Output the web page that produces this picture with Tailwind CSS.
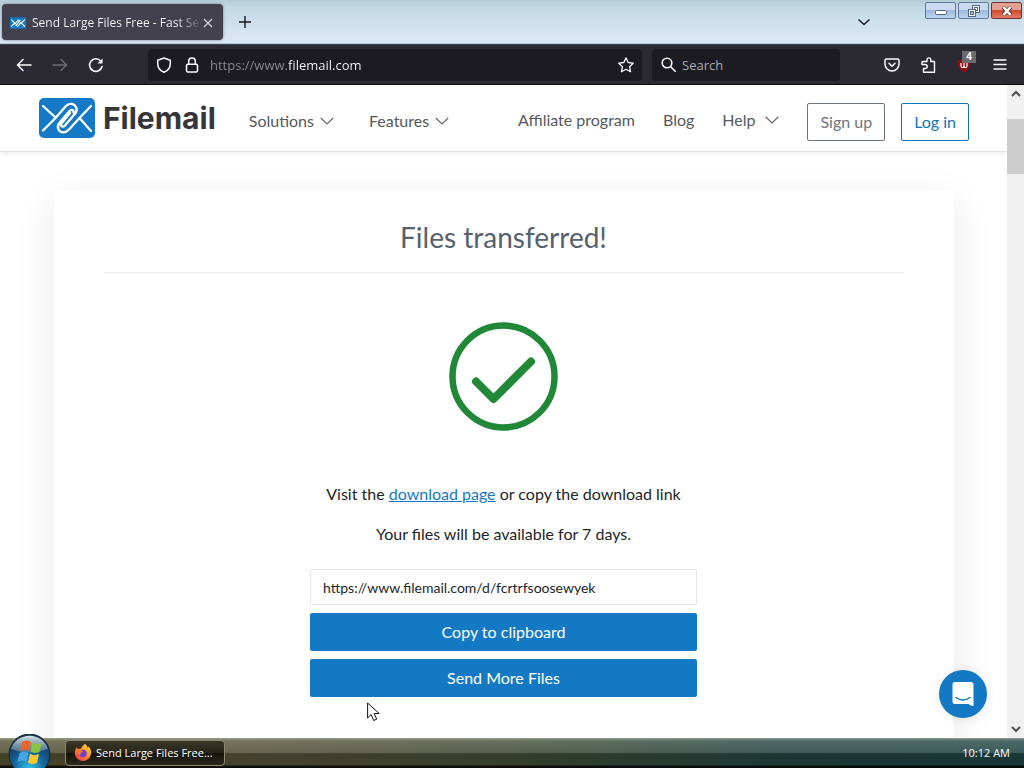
<!DOCTYPE html>
<html lang="en">
<head>
<meta charset="utf-8">
<meta name="viewport" content="width=device-width, initial-scale=1">
<title>Filemail - Files transferred</title>
<script src="https://cdn.jsdelivr.net/npm/@tailwindcss/browser@4"></script>
</head>
<body class="flex h-screen flex-col overflow-hidden bg-white font-['Lato',sans-serif] text-base text-[#212529]">

<!-- Window title bar and tabs -->
<div class="flex h-11 shrink-0 items-start bg-[linear-gradient(180deg,#b3ccd4_0,#c3dae6_8px,#cfe0ee_24px,#dceaf5_43px,#8fa3b5_44px)] font-['Open_Sans',sans-serif]">
  <div class="mt-1 ml-0.5 flex h-9 w-[221px] items-center rounded bg-[#42414d] pt-0.5 pr-2 pl-2 text-xs text-[#fbfbfe] shadow-[0_0_3px_#77758c]">
    <svg class="h-3 w-4 shrink-0" viewBox="0 0 56 40" fill="none" stroke="#fff" stroke-width="4"><rect width="56" height="40" rx="4" fill="#1479c6" stroke="none"/><path d="M4 8l13 12L4 33M52 8L39 20l13 13M20 31L36 9M16 25L30 8M26 33l14-17"/></svg>
    <span class="ml-1.5 w-[170px] shrink-0 overflow-hidden bg-[linear-gradient(90deg,#fbfbfe_145px,transparent_170px)] bg-clip-text whitespace-nowrap text-transparent">Send Large Files Free - Fast Secu</span>
    <button aria-label="Close tab" class="shrink-0"><svg class="size-3" viewBox="0 0 12 12" stroke="#d5d5dc" stroke-width="1.2"><path d="M2 2l8 8M10 2l-8 8"/></svg></button>
  </div>
  <button aria-label="New tab" class="mt-4 ml-4"><svg class="size-3" viewBox="0 0 12 12" stroke="#17171f" stroke-width="1.4"><path d="M6 0v12M0 6h12"/></svg></button>
  <div class="grow"></div>
  <button aria-label="List all tabs" class="mt-4 mr-[54px]"><svg class="size-3.5" viewBox="0 0 14 14" fill="none" stroke="#22222c" stroke-width="1.6"><path d="M1.500 3.500L7 8.500l5.500-5"/></svg></button>
  <div class="mr-0.5 flex gap-0.5 pt-0.5">
    <button aria-label="Minimize" class="flex h-[17px] w-[31px] items-center justify-center rounded-xs border border-[#62789d] bg-[linear-gradient(180deg,#c9dcef_45%,#9ab9db_50%,#bed6ee)]"><svg class="h-2.5 w-3" viewBox="0 0 12 10"><rect x=".5" y="4.500" width="11" height="4" rx="1" fill="#fff" stroke="#536580"/></svg></button>
    <button aria-label="Restore" class="flex h-[17px] w-[31px] items-center justify-center rounded-xs border border-[#62789d] bg-[linear-gradient(180deg,#c9dcef_45%,#9ab9db_50%,#bed6ee)]"><svg class="size-3" viewBox="0 0 12 12" fill="#fff" stroke="#536580"><rect x="4.500" y=".5" width="7" height="7"/><rect x="6.500" y="2.500" width="3" height="3"/><rect x=".5" y="4.500" width="7" height="7"/><rect x="2.500" y="6.500" width="3" height="3" fill="#a5c0dd"/></svg></button>
    <button aria-label="Close window" class="flex h-[17px] w-[31px] items-center justify-center rounded-xs border border-[#6b3434] bg-[linear-gradient(180deg,#e6a091_45%,#ce4a31_50%,#e57a60)]"><svg class="h-2.5 w-3" viewBox="0 0 12 10" fill="none"><path d="M2 1l8 8M10 1L2 9" stroke="#5c3d4c" stroke-width="4"/><path d="M2.500 1l7 8M9.500 1l-7 8" stroke="#fff" stroke-width="2.400"/></svg></button>
  </div>
</div>

<!-- Browser toolbar -->
<div class="flex h-[41px] shrink-0 items-center border-t border-b border-t-[#3c4450] border-b-[#0c0c0d] bg-[#2b2a33] pr-4 pl-4 font-['Open_Sans',sans-serif] text-[13px] text-[#fbfbfe]">
  <div class="flex w-[132px] shrink-0 items-center gap-5">
    <button aria-label="Back"><svg class="size-4" viewBox="0 0 16 16" fill="none" stroke="#fbfbfe" stroke-width="1.5" stroke-linecap="round" stroke-linejoin="round"><path d="M15 8H1.500M7 2.500L1.500 8 7 13.500"/></svg></button>
    <button aria-label="Forward"><svg class="size-4" viewBox="0 0 16 16" fill="none" stroke="#6d6c74" stroke-width="1.500" stroke-linecap="round" stroke-linejoin="round"><path d="M1 8h13.500M9 2.500L14.500 8 9 13.500"/></svg></button>
    <button aria-label="Reload"><svg class="size-4" viewBox="0 0 16 16" fill="none" stroke="#fbfbfe" stroke-width="1.600" stroke-linecap="round"><path d="M14 9.500A6.300 6.300 0 1 1 12.700 4"/><path d="M14.500 1.500v5h-5z" fill="#fbfbfe" stroke="none"/></svg></button>
  </div>
  <div class="flex h-8 min-w-0 grow items-center rounded bg-[#1c1b22] px-2">
    <svg class="size-4 shrink-0" viewBox="0 0 16 16" fill="none" stroke="#fbfbfe" stroke-width="1.500" stroke-linejoin="round"><path d="M8 1l6.300 2.200v3C14.300 11 11.500 14 8 15.300 4.500 14 1.700 11 1.700 6.200v-3z"/></svg>
    <svg class="ml-3 size-4 shrink-0" viewBox="0 0 16 16" fill="none" stroke="#fbfbfe" stroke-width="1.500"><rect x="2.500" y="7.300" width="11" height="7.700" rx="1.500"/><path d="M4.700 7V4.200a3.300 3.300 0 0 1 6.600 0V7"/></svg>
    <input aria-label="Address" value="https://www.filemail.com" class="ml-2.5 min-w-0 grow bg-[linear-gradient(90deg,#8b8b94_77px,#fbfbfe_77px)] bg-clip-text pt-0.5 text-transparent outline-none">
    <button aria-label="Bookmark this page"><svg class="size-4" viewBox="0 0 16 16" fill="none" stroke="#fbfbfe" stroke-width="1.300" stroke-linejoin="round"><path d="M8 .9l2.200 4.600 5 .7-3.600 3.500.9 5L8 12.300l-4.500 2.400.9-5L.8 6.200l5-.7z"/></svg></button>
  </div>
  <div class="ml-2.5 flex h-8 w-[188px] shrink-0 items-center gap-1.5 rounded bg-[#1c1b22] px-2 ">
    <svg class="size-4 shrink-0" viewBox="0 0 16 16" fill="none" stroke="#fbfbfe" stroke-width="1.600" stroke-linecap="round"><circle cx="7" cy="6" r="4.800"/><path d="M10.600 9.600l4.600 4.600"/></svg>
    <input aria-label="Search" placeholder="Search" class="min-w-0 grow pt-0.5 outline-none placeholder:text-[#a9a9b0]">
  </div>
  <div class="ml-11 flex shrink-0 items-center gap-5">
    <button aria-label="Save to Pocket"><svg class="size-4" viewBox="0 0 16 16" fill="none" stroke="#fbfbfe" stroke-width="1.500" stroke-linecap="round" stroke-linejoin="round"><path d="M2.500 2h11A1.500 1.500 0 0 1 15 3.500V7A7 7 0 0 1 1 7V3.500A1.500 1.500 0 0 1 2.500 2z"/><path d="M5 6.300l3 2.900 3-2.900"/></svg></button>
    <button aria-label="Extensions"><svg class="size-4" viewBox="0 0 16 16" fill="none" stroke="#fbfbfe" stroke-width="1.400" stroke-linejoin="round"><path d="M7 4.500V2.800a1.900 1.900 0 0 1 3.800 0v1.700h3.700v10.700H3.500v-3.700h1.700a2 2 0 0 0 0-4H2V5.500Q2 4.500 3 4.500z"/></svg></button>
    <button aria-label="Blocker, 4 blocked" class="relative">
      <svg class="size-4" viewBox="0 0 16 16"><path d="M8 1c2 1.500 4 2 6.500 2 0 6-1.500 10-6.500 12.500C3 13 1.500 9 1.500 3 4 3 6 2.500 8 1z" fill="#930b10"/><path d="M5 6v3q0 1.500 1.500 1.500T8 9V6v3q0 1.500 1.500 1.500T11 9V6" fill="none" stroke="#fff" stroke-width="1.200"/></svg>
      <span class="absolute -top-1.5 -right-1 flex h-3 w-3.5 items-center justify-center bg-[#6b6b6f] text-[10px] font-bold">4</span>
    </button>
    <button aria-label="Menu"><svg class="size-4" viewBox="0 0 16 16" stroke="#fbfbfe" stroke-width="1.300" stroke-linecap="round"><path d="M2 3h12M2 7.500h12M2 12h12"/></svg></button>
  </div>
</div>

<!-- Web page with its scrollbar -->
<div class="relative flex min-h-0 grow">
  <div class="flex min-w-0 grow flex-col overflow-hidden">
    <header class="z-10 flex h-[67px] shrink-0 items-center border-b border-[#e2e2e2] bg-white pr-[38px] pl-[39px] text-[#555a60] shadow-[0_2px_5px_rgba(0,0,0,0.08)]">
      <a href="#" class="flex items-center gap-2 text-[#363639]">
        <svg class="h-10 w-14" viewBox="0 0 56 40" fill="none" stroke="#fff" stroke-width="2.300" stroke-linecap="round" stroke-linejoin="round"><rect width="56" height="40" rx="5" fill="#1479c6" stroke="none"/><path d="M4 8l12.500 11.500M4 32.500L16.500 20 26.500 8.500C30 4.500 35 5.500 37 9c1.200 2.400.8 4.500-.8 6.500L26 27.500c-2 2.200-4.500 1-4-1.500M52 8L40.500 20 30 31.500c-3.500 4-8.500 3.500-10.500 0-1.200-2.400-.8-4.500.8-6.500L30.500 13c2-2.200 4.500-1 4 1.500M40.500 20L52 33M22 26l9-11"/></svg>
        <span class="font-['Inter',sans-serif] text-[30px] leading-10 font-bold">Filemail</span>
      </a>
      <nav class="ml-[33px] flex grow items-center pt-1 whitespace-nowrap">
        <button class="flex items-center gap-1.5 pt-0.5">Solutions <svg class="h-2 w-3.5" viewBox="0 0 14 8" fill="none" stroke="#666" stroke-width="1.200"><path d="M.8 1L7 7l6.200-6"/></svg></button>
        <button class="ml-[35px] flex items-center gap-1.5 pt-0.5">Features <svg class="h-2 w-3.5" viewBox="0 0 14 8" fill="none" stroke="#666" stroke-width="1.200"><path d="M.8 1L7 7l6.200-6"/></svg></button>
        <div class="grow"></div>
        <a href="#">Affiliate program</a>
        <a href="#" class="ml-7">Blog</a>
        <button class="ml-7 flex items-center gap-2.5">Help <svg class="h-2 w-3.5" viewBox="0 0 14 8" fill="none" stroke="#666" stroke-width="1.200"><path d="M.8 1L7 7l6.200-6"/></svg></button>
        <a href="#" class="mt-2 mb-1 ml-7 rounded-xs border border-[#6c757d] px-3 py-1.5 text-[#6c757d]">Sign up</a>
        <a href="#" class="mt-2 mb-1 ml-4 rounded-xs border border-[#1274b8] px-3 py-1.5 text-[#1274b8]">Log in</a>
      </nav>
    </header>

    <main class="flex min-h-0 grow justify-center px-[53px] pt-[38px]">
      <section class="flex w-full max-w-[900px] flex-col items-center bg-white px-[50px] pt-[26px] shadow-[0_12px_40px_rgba(0,0,0,0.09)]">
        <h1 class="w-full border-b border-[#ebebeb] pb-[14px] text-center text-[28px] leading-[42px] text-[#56616f]">Files transferred!</h1>
        <svg class="mt-[49px] size-[109px]" viewBox="0 0 109 109" fill="none" stroke="#218838" role="img" aria-label="Success"><circle cx="54.500" cy="54.500" r="51" stroke-width="6.500"/><path d="M27 59.500l17.500 17.500L82 39.500" stroke-width="8" stroke-linecap="round" stroke-linejoin="round"/></svg>
        <p class="mt-[51px] leading-6">Visit the <a href="#" class="text-[#1479c4] underline">download page</a> or copy the download link</p>
        <p class="mt-4 leading-6">Your files will be available for 7 days.</p>
        <div class="mt-[23px] flex w-full max-w-[387px] flex-col gap-2">
          <input aria-label="Download link" readonly value="https://www.filemail.com/d/fcrtrfsoosewyek" class="h-9 rounded-xs border border-[#e6e6e6] px-3 text-sm outline-none">
          <button class="h-[38px] rounded-xs bg-[#1479c4] text-white">Copy to clipboard</button>
          <button class="h-[38px] rounded-xs bg-[#1479c4] text-white">Send More Files</button>
        </div>
      </section>
    </main>
  </div>

  <div class="flex w-[17px] shrink-0 flex-col items-center bg-[#f0f0f0]">
    <svg class="my-1 h-2.5 w-2.5" viewBox="0 0 10 10" fill="none" stroke="#505050" stroke-width="2"><path d="M1 7l4-4 4 4"/></svg>
    <div class="mt-4 h-[55px] w-full bg-[#cdcdcd]"></div>
    <div class="grow"></div>
    <svg class="mb-1 h-2.5 w-2.5" viewBox="0 0 10 10" fill="none" stroke="#505050" stroke-width="2"><path d="M1 3l4 4 4-4"/></svg>
  </div>

  <button aria-label="Open chat" class="absolute right-[37px] bottom-5 flex size-12 items-center justify-center rounded-full bg-[#1479c4] shadow-[0_1px_12px_rgba(0,0,0,0.1)]"><svg class="h-6 w-[22px]" viewBox="0 0 22 24" fill="none"><path d="M3 0h16a2.500 2.500 0 0 1 2.500 2.500V24c-2 0-3.500-1-5-2H3a2.500 2.500 0 0 1-2.500-2.500v-17A2.500 2.500 0 0 1 3 0z" fill="#fff"/><path d="M4 15.500q7 5 14 0" stroke="#1479c4" stroke-width="1.500" stroke-linecap="round"/></svg></button>
  <svg class="absolute bottom-4 left-[367px] h-5 w-[13px]" viewBox="0 0 13 20"><path d="M.6 1v15l3.600-3.500 2.500 6 3-1.300-2.500-5.700h5z" fill="#fff" stroke="#111"/></svg>
</div>

<!-- Taskbar -->
<div class="flex h-[30px] shrink-0 items-center bg-[linear-gradient(180deg,rgba(205,215,200,0.6)_0,rgba(255,255,255,0.2)_3px,rgba(255,255,255,0.12)_50%,rgba(0,0,0,0.2)_52%,rgba(0,0,0,0.15)_88%,rgba(0,0,0,0.85)_96%),linear-gradient(90deg,#514e2e_0,#525037_25%,#414a35_50%,#24443f_75%,#1d4342)] pr-3.5 pl-2 font-['Open_Sans',sans-serif] text-[11px] text-white">
  <button aria-label="Start" class="relative h-[30px] w-[44px] shrink-0">
    <svg class="absolute -top-1 left-0 h-[34px] w-[44px]" viewBox="0 0 44 34"><defs><radialGradient id="orb" cx="50%" cy="85%" r="75%"><stop offset="0" stop-color="#35c4ec"/><stop offset=".5" stop-color="#12679f"/><stop offset="1" stop-color="#17324e"/></radialGradient><linearGradient id="gloss" x2="0" y2="1"><stop offset="0" stop-color="#dbe6ec"/><stop offset="1" stop-color="#7f9fb5" stop-opacity=".45"/></linearGradient></defs><circle cx="21.500" cy="20.500" r="20.500" fill="url(#orb)" stroke="#17252c"/><path d="M3 15a19.500 19.500 0 0 1 37 0q-18 7-37 0z" fill="url(#gloss)"/><path d="M14 8q5-3 9 0l-2 9q-4-3-9 0z" fill="#ec642b"/><path d="M24.500 8.500q4 3 9 .5l-2 9q-5 2-9-.5z" fill="#8bc53f"/><path d="M11.500 19q5-3 9 0l-2 9q-4-3-9 0z" fill="#44a4e6"/><path d="M22 19.500q4 3 9 .5l-2 9q-5 2-9-.5z" fill="#fcc92d"/></svg>
  </button>
  <button class="ml-[13px] flex h-[26px] w-40 shrink-0 items-center gap-1 rounded-sm border border-[#8a8a70] bg-[linear-gradient(180deg,#38372a,#262517_50%,#14140b_52%,#2a291d)] pl-2 whitespace-nowrap">
    <svg class="size-[18px] shrink-0" viewBox="0 0 18 18"><defs><linearGradient id="fox" x1="1" x2="0" y2="1"><stop offset="0" stop-color="#fff044"/><stop offset=".4" stop-color="#ff9a24"/><stop offset="1" stop-color="#ef2353"/></linearGradient></defs><path d="M11 0c1.500 1 2.500 2.300 2.700 4l.8-1.500C16.500 4 17.500 7 17 10a8.200 8.200 0 0 1-16.200 0C.5 7 1.500 4.500 3 3l.5 2 3.500-.5C8 2 9.500 1 11 0z" fill="url(#fox)"/><circle cx="9" cy="9.500" r="3.800" fill="#7443c9"/><path d="M3 7c3-1.500 5-.5 6 1-2 0-3 1-2.500 2.500C4 11 3 9 3 7z" fill="#ff8126"/></svg>
    Send Large Files Free...
  </button>
  <div class="grow"></div>
  <time datetime="10:12">10:12 AM</time>
</div>
</body>
</html>
